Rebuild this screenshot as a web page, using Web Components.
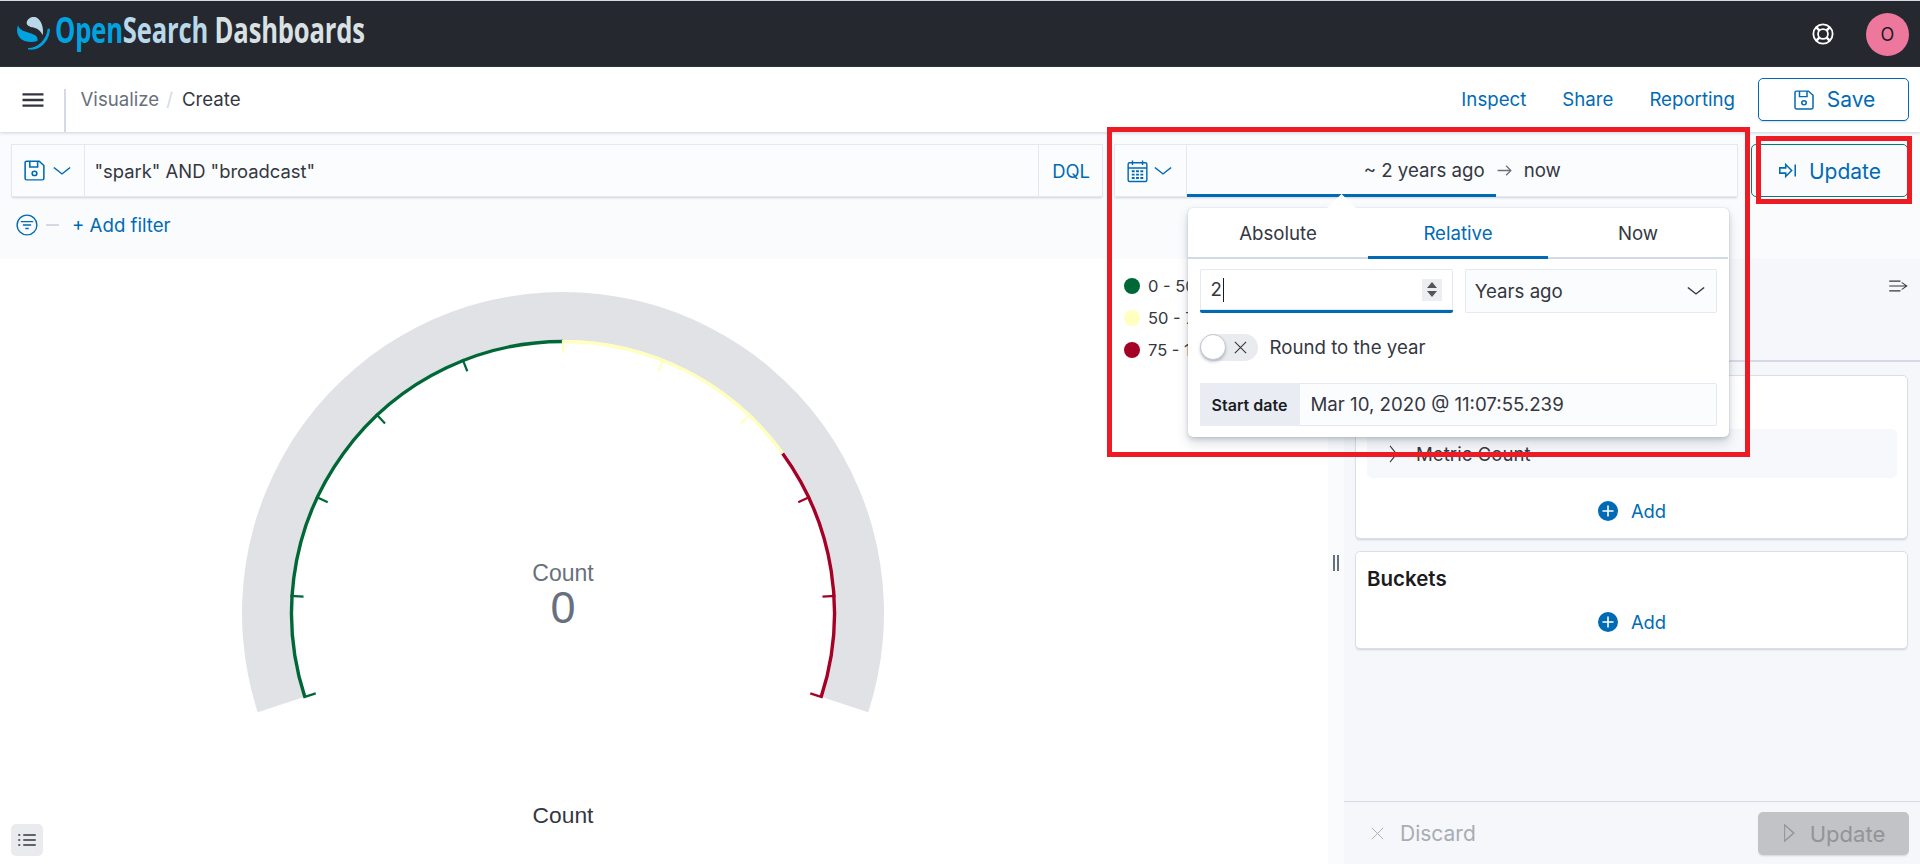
<!DOCTYPE html>
<html lang="en">
<head>
<meta charset="utf-8">
<title>Visualize</title>
<style>
html,body{margin:0;padding:0;background:#fff}
body{width:1920px;height:864px;overflow:hidden;font-family:Inter,"Liberation Sans",sans-serif;color:#343741;position:relative}
os-app{display:flex;flex-direction:column;width:1920px;height:864px;position:relative}
</style>
</head>
<body>
<os-app>
  <os-header></os-header>
  <os-nav></os-nav>
  <os-querybar></os-querybar>
  <os-workspace>
    <os-gauge slot="vis"></os-gauge>
    <os-legend slot="legend"></os-legend>
    <os-panel slot="panel"></os-panel>
  </os-workspace>
  <os-popover></os-popover>
  <os-annot style="left:1107px;top:127px;width:643px;height:330px"></os-annot>
  <os-annot style="left:1756px;top:136px;width:156px;height:68px"></os-annot>
</os-app>
<script>
const ICONS={
 menu:'<path d="M1 3h14M1 8h14M1 13h14" stroke-width="2.1"/>',
 save:'<path d="M3 1.5h8l3 3V13.5a1 1 0 0 1-1 1H3a1 1 0 0 1-1-1v-11a1 1 0 0 1 1-1z"/><path d="M5 1.5v4h5v-4"/><circle cx="8" cy="10" r="1.5"/>',
 chev:'<path d="M1.5 4.5L8 11l6.5-6.5"/>',
 chevr:'<path d="M5 1.5L11.5 8 5 14.5"/>',
 filter:'<circle cx="8" cy="8" r="7.2"/><path d="M3.5 5.5h9M5 8h6M6.8 10.5h2.4"/>',
 cal:'<rect x="1.5" y="2.5" width="13" height="12.5" rx="1"/><path d="M1.5 6h13M4.5 1v3M11.5 1v3"/><path d="M4 8.2h2M7 8.2h2M10 8.2h2M4 10.4h2M7 10.4h2M10 10.4h2M4 12.6h2M7 12.6h2M10 12.6h2" stroke-width="1.3"/>',
 arrow:'<path d="M1.5 8h12.5M9.5 3.5L14 8l-4.5 4.5"/>',
 refresh:'<path d="M1.5 5.8h5V3l5 5-5 5v-2.8h-5z" stroke-width="1.3"/><path d="M14.5 3v10" stroke-width="1.3"/>',
 ring:'<circle cx="8" cy="8" r="7"/><circle cx="8" cy="8" r="3.6"/><path d="M3 3l2.5 2.5M13 3l-2.5 2.5M3 13l2.5-2.5M13 13l-2.5-2.5" stroke-width="1.8"/>',
 x:'<path d="M2 2l12 12M14 2L2 14"/>',
 play:'<path d="M3 1.5L13.5 8 3 14.5z"/>',
 list:'<path d="M5 3h10M5 8h10M5 13h10" stroke-width="1.6"/><path d="M1 3h1.6M1 8h1.6M1 13h1.6" stroke-width="1.6"/>',
 collapse:'<path d="M1 2.5h9M1 13.5h9" stroke-width="1.3"/><path d="M1 8h14M11 4l4 4-4 4"/>'
};
class OsIcon extends HTMLElement{
  constructor(){super();const r=this.attachShadow({mode:'open'});
    const n=this.getAttribute('name'),w=this.getAttribute('w')||16,h=this.getAttribute('h')||w,c=this.getAttribute('color')||'currentColor',sw=this.getAttribute('sw')||1;
    r.innerHTML=`<style>:host{display:inline-flex;flex:none}svg{display:block}</style><svg width="${w}" height="${h}" viewBox="0 0 16 16" preserveAspectRatio="none" fill="none" stroke="${c}" stroke-width="${sw}">${ICONS[n]||''}</svg>`;}
}
customElements.define('os-icon',OsIcon);
function def(name,html){
  customElements.define(name,class extends HTMLElement{
    constructor(){super();this.attachShadow({mode:'open'}).innerHTML=html;}
  });
}
def('os-header',`<style>
:host{display:flex;align-items:center;height:66px;flex:none;background:#25282f;border-top:1px solid #d3dae6;padding-left:10px;padding-right:11px}
.mark{display:block;margin-top:-2px}
.name{width:307px;margin-left:-5px;height:50px;overflow:visible;white-space:nowrap}
.name span.t{display:inline-block;font:700 35px/50px "Open Sans",sans-serif;transform:scaleX(.73);transform-origin:0 50%;letter-spacing:-.2px;margin-top:-4px}
.o{color:#00a3e0}.s{color:#b9d9eb}.d{color:#d9e1e2}
.sp{flex:1}
.ring{margin-right:32px;margin-left:0;color:#fff}
.av{width:43px;height:43px;border-radius:50%;background:#ee789d;color:#1a1c21;font-size:18px;display:flex;align-items:center;justify-content:center}
</style>
<svg class="mark" width="50" height="46" viewBox="0 0 150 138">
<path fill="#b9d9eb" d="M50 38C52 24 68 18 78 22 95 30 102 55 98 76 92 60 80 55 68 52 58 50 50 46 50 38Z"/>
<path fill="#00a3e0" d="M24 46C28 60 42 64 56 68 72 72 86 78 82 93 70 97 58 97 44 93 26 87 16 68 24 46Z"/>
<path fill="#00a3e0" d="M54 114C82 114 110 90 113 56L120 56C119 92 90 125 54 118Z"/>
</svg>
<div class="name"><span class="t"><span class="o">Open</span><span class="s">Search</span> <span class="d">Dashboards</span></span></div>
<div class="sp"></div>
<os-icon class="ring" name="ring" w="22" sw="1.3"></os-icon>
<div class="av">O</div>`);
def('os-nav',`<style>
:host{display:flex;align-items:center;height:65px;flex:none;background:#fff;box-shadow:0 1px 3px rgba(152,162,179,.45);position:relative;z-index:2;font-size:18.67px;padding-right:11px}
.burger{width:64px;flex:none;display:flex;justify-content:center;color:#343741;padding-left:1px;box-sizing:border-box;align-self:stretch;align-items:center}
.div{width:1.5px;height:43px;background:#d3dae6;align-self:flex-end;flex:none}
.crumb{margin-left:15px;color:#69707d}.sl{margin:0 9px 0 7px;color:#d3dae6}.cur{color:#343741}
.sp{flex:1}
a{color:#006bb4;text-decoration:none;margin-right:36px}
a.last{margin-right:23px}
.btn{width:151px;height:43px;box-sizing:border-box;border:1.5px solid #006bb4;border-radius:5px;display:flex;align-items:center;justify-content:center;gap:11px;color:#006bb4;font-size:21px;box-shadow:0 2px 2px -1px rgba(152,162,179,.4);background:#fff}
</style>
<div class="burger"><os-icon name="menu" w="24" h="18"></os-icon></div><div class="div"></div>
<span class="crumb">Visualize</span><span class="sl">/</span><span class="cur">Create</span>
<div class="sp"></div>
<a>Inspect</a><a>Share</a><a class="last">Reporting</a>
<div class="btn"><os-icon name="save" w="24" h="22" sw="1"></os-icon><span>Save</span></div>`);
def('os-querybar',`<style>
:host{display:block;flex:none;height:127px;box-sizing:border-box;background:#fafbfd;padding:12px 12px 0 11px;font-size:18.4px}
.row{display:flex;height:53px}
.box{display:flex;align-items:center;background:#fbfcfd;box-shadow:inset 0 0 0 1px #e4e8f0,0 2px 2px -1px rgba(152,162,179,.45);box-sizing:border-box}
.q{width:1092px}
.seg{display:flex;align-items:center;align-self:stretch;color:#006bb4;flex:none;box-sizing:border-box;border-right:1px solid #e4e8f0}
.seg.a{width:73.5px;padding-left:11px;gap:5px}
.txt{flex:1;padding-left:10px;white-space:nowrap}
.dql{color:#006bb4;flex:none;width:65px;box-sizing:border-box;align-self:stretch;display:flex;align-items:center;justify-content:center;border-left:1px solid #e4e8f0}
.p{width:624px;margin-left:11px;font-size:18.67px}
.seg.b{width:72.5px;padding-left:11.5px;gap:4px}
.dates{flex:1;align-self:stretch;display:flex;align-items:center;justify-content:center;gap:11px;position:relative;white-space:nowrap}
.ar{color:#69707d}
.dates i{position:absolute;left:0;bottom:0;width:309px;height:3px;background:#006bb4}
.up{width:157px;margin-left:13px;box-sizing:border-box;border:1.5px solid #017d73;border-radius:5px;display:flex;align-items:center;justify-content:center;gap:12px;color:#006bb4;font-size:21px}
.up span{padding-top:1px}
.f{display:flex;align-items:center;height:56px;margin-left:5px;color:#006bb4;font-size:18.67px}
.f .dash{width:13px;height:1.5px;background:#d3dae6;margin:0 13px 0 8px}
</style>
<div class="row">
 <div class="box q"><div class="seg a"><os-icon name="save" w="25" h="23" sw="1"></os-icon><os-icon name="chev" w="20" h="16" sw="1.2"></os-icon></div><div class="txt">"spark" AND "broadcast"</div><div class="dql">DQL</div></div>
 <div class="box p"><div class="seg b"><os-icon name="cal" w="23" h="24" sw="1"></os-icon><os-icon name="chev" w="20" h="16" sw="1.2"></os-icon></div>
  <div class="dates"><span>~ 2 years ago</span><os-icon class="ar" name="arrow" w="17" sw="1.2"></os-icon><span>now</span><i></i></div></div>
 <div class="up"><os-icon name="refresh" w="19"></os-icon><span>Update</span></div>
</div>
<div class="f"><os-icon name="filter" w="22" sw="1"></os-icon><div class="dash"></div><span>+ Add filter</span></div>`);
def('os-workspace',`<style>
:host{display:flex;flex:1;min-height:0;background:#fff}
.vis{width:1126px;flex:none;position:relative}
.leg{width:202px;flex:none}
.res{width:16px;flex:none;background:#fafbfd;position:relative;box-sizing:border-box;display:flex;justify-content:center;padding-top:296px}
.res b{display:block;width:6px;height:16px;box-sizing:border-box;border-left:2px solid #69707d;border-right:2px solid #69707d}
.pan{width:576px;flex:none;display:flex}
</style>
<div class="vis"><slot name="vis"></slot></div><div class="leg"><slot name="legend"></slot></div>
<div class="res"><b></b></div><div class="pan"><slot name="panel"></slot></div>`);
customElements.define('os-gauge',class extends HTMLElement{
  constructor(){super();
    const cx=330,cy=324;
    const pt=(r,d)=>{const a=d*Math.PI/180;return [(cx+r*Math.cos(a)).toFixed(2),(cy-r*Math.sin(a)).toFixed(2)]};
    const arc=(r,a,b)=>{const s=pt(r,a),e=pt(r,b);return `M${s[0]} ${s[1]}A${r} ${r} 0 ${a-b>180?1:0} 1 ${e[0]} ${e[1]}`};
    const ring=()=>{const s=pt(321,198),e=pt(321,-18),s2=pt(273,-18),e2=pt(273,198);return `M${s[0]} ${s[1]}A321 321 0 1 1 ${e[0]} ${e[1]}L${s2[0]} ${s2[1]}A273 273 0 1 0 ${e2[0]} ${e2[1]}Z`};
    const G='#006837',Y='#ffffbf',R='#a50026';
    let s=`<path d="${ring()}" fill="#e0e2e6"/>`;
    s+=`<path d="${arc(271.5,198,90)}" stroke="${G}" stroke-width="3.4" fill="none"/><path d="${arc(271.5,90,36)}" stroke="${Y}" stroke-width="3.4" fill="none"/><path d="${arc(271.5,36,-18)}" stroke="${R}" stroke-width="3.4" fill="none"/>`;
    for(let i=0;i<=10;i++){const d=198-21.6*i,a=pt(273,d),b=pt(260,d),c=i<5?G:i<8?Y:R;
      s+=`<path d="M${a[0]} ${a[1]}L${b[0]} ${b[1]}" stroke="${c}" stroke-width="2.2"/>`;}
    this.attachShadow({mode:'open'}).innerHTML=`<style>
:host{display:flex;flex-direction:column;align-items:center;height:605px;padding-top:30px;box-sizing:border-box;font-family:"Liberation Sans",Arial,sans-serif}
.g{position:relative;width:660px;height:430px;flex:none}
svg{display:block}
.c{position:absolute;left:0;right:0;top:272px;text-align:center;color:#69707d;font-size:23px;line-height:24px}
.v{position:absolute;left:0;right:0;top:294px;text-align:center;color:#69707d;font-size:45px;line-height:50px}
.l{margin-top:84px;font-size:22.8px;line-height:24px;color:#343741}
.btn{position:absolute;left:11px;bottom:8px;width:32px;height:32px;border-radius:5px;background:#e9ebee;display:flex;align-items:center;justify-content:center;color:#343741}
</style><div class="g"><svg width="660" height="430" viewBox="0 0 660 430">${s}</svg><div class="c">Count</div><div class="v">0</div></div><div class="l">Count</div><div class="btn"><os-icon name="list" w="20" h="16"></os-icon></div>`;}
});
def('os-legend',`<style>
:host{display:flex;flex-direction:column;gap:16px;padding-top:19px;margin-left:-2px;font-size:16.5px;color:#343741;white-space:nowrap}
div{display:flex;align-items:center;height:16px;gap:8px}
b{width:16px;height:16px;border-radius:50%;display:block}
</style>
<div><b style="background:#006837"></b>0 - 50</div>
<div><b style="background:#ffffbf"></b>50 - 75</div>
<div><b style="background:#a50026"></b>75 - 100</div>`);
def('os-card',`<style>
:host{display:block;background:#fff;border:1px solid #d9dfe9;border-radius:5px;box-sizing:border-box;box-shadow:0 2px 2px -1px rgba(152,162,179,.45);padding:0 10px 0 11px}
</style><slot></slot>`);
def('os-add',`<style>
:host{display:flex;align-items:center;justify-content:center;gap:13px;color:#006bb4;font-size:18.4px;height:24px}
svg{display:block}
</style><svg width="20" height="20" viewBox="0 0 20 20"><circle cx="10" cy="10" r="10" fill="#006bb4"/><path d="M10 4.5v11M4.5 10h11" stroke="#fff" stroke-width="1.6"/></svg><span>Add</span>`);
def('os-panel',`<style>
:host{display:flex;flex-direction:column;width:576px;height:605px;background:#f5f7fa;font-size:18.67px}
.top{flex:none;border-bottom:2px solid #d3dae6;display:flex;justify-content:flex-end;padding:20px 12px 0 0;box-sizing:border-box;height:103px}
.body{flex:1;padding:13px 12px 0 11px}
.c1{height:164px;padding-top:53px;margin:0}
.row{height:49px;background:#f7f8fb;border-radius:5px;display:flex;align-items:center;padding-left:18px;gap:15px;color:#343741;white-space:nowrap}
.row span{padding-top:2px}
.c1 os-add{margin-top:21px}
.c2{height:98px;margin-top:12px}
h3{margin:0;padding-top:15px;font-size:20.5px;font-weight:600;line-height:24px;color:#1a1c21}
.c2 os-add{margin-top:19px}
.foot{height:63px;flex:none;border-top:1.5px solid #d3dae6;box-sizing:border-box;display:flex;align-items:center;padding:0 11px 0 26px;color:#a8acb3;font-size:21px}
.sp{flex:1}
.d{display:flex;align-items:center;gap:15px}
.d span,.u span{padding-top:1px}
.u{width:151px;height:43px;border-radius:5px;background:#c2c3c6;color:#919499;display:flex;align-items:center;justify-content:center;gap:14px;font-size:22px;box-shadow:0 2px 2px -1px rgba(152,162,179,.4)}
.cl{color:#343741}
</style>
<div class="top"><os-icon class="cl" name="collapse" w="20" h="14"></os-icon></div>
<div class="body">
 <os-card class="c1"><div class="row"><os-icon name="chevr" w="16" h="20" sw="1.1"></os-icon><span>Metric Count</span></div><os-add></os-add></os-card>
 <os-card class="c2"><h3>Buckets</h3><os-add></os-add></os-card>
</div>
<div class="foot"><div class="d"><os-icon name="x" w="15"></os-icon><span>Discard</span></div><div class="sp"></div><div class="u"><os-icon name="play" w="14" h="20" sw="1.2"></os-icon><span>Update</span></div></div>`);
def('os-popover',`<style>
:host{position:absolute;left:1188px;top:208px;width:541px;height:229px;box-sizing:border-box;background:#fff;border-radius:5px;box-shadow:0 0 1px rgba(152,162,179,.6),0 6px 12px rgba(65,78,101,.2),0 2px 4px rgba(65,78,101,.2);font-size:18.67px;z-index:5;color:#343741;display:block}
.tip{position:absolute;left:139px;top:-14px;width:29px;height:14px;background:#fff;clip-path:polygon(50% 0,100% 100%,0 100%)}
.tabs{display:flex;height:51px;box-sizing:border-box;border-bottom:2px solid #d3dae6;margin-right:1px}
.tab{width:180px;display:flex;align-items:center;justify-content:center;height:51px;box-sizing:border-box;padding-bottom:1px}
.on{color:#006bb4;border-bottom:3px solid #006bb4;padding-top:2px;padding-bottom:0}
.b{padding:10px 12px 0 11.5px}
.r1{display:flex;gap:12px}
.inp{height:44px;box-sizing:border-box;background:#fbfcfd;box-shadow:inset 0 0 0 1px #e4e8f0;border-radius:2px;display:flex;align-items:center;position:relative}
.n{width:253.5px;background:#fff;padding-left:11px;border-bottom:3px solid #006bb4}
.caret{width:1.3px;height:24px;background:#1a1c21;margin-left:1px}
.sp{flex:1}
.spin{width:20px;height:22px;background:#eceef1;margin-right:11px;display:flex;flex-direction:column;align-items:center;justify-content:center;gap:3px}
.up,.dn{width:0;height:0;border-left:5px solid transparent;border-right:5px solid transparent}
.up{border-bottom:6px solid #555}.dn{border-top:6px solid #555}
.s{width:252.5px;padding:0 11px 0 10px}
.r2{display:flex;align-items:center;gap:12px;margin-top:21px;height:27px}
.sw{width:58px;height:27px;border-radius:14px;background:#e9ebef;position:relative;display:flex;align-items:center;justify-content:flex-end;padding-right:10px;box-sizing:border-box;color:#343741}
.k{position:absolute;left:0;top:0;width:26px;height:26px;border-radius:50%;background:#fff;border:1px solid #c2c7d0;box-sizing:border-box;box-shadow:0 2px 3px rgba(65,78,101,.3)}
.lab{font-size:18.67px}
.r3{display:flex;margin-top:22px;height:43px;box-shadow:inset 0 0 0 1px #e4e8f0;border-radius:2px;background:#fbfcfd;align-items:stretch}
.pre{width:100px;background:#e9edf3;display:flex;align-items:center;justify-content:center;font-size:16px;font-weight:600;color:#1a1c21;white-space:nowrap}
.val{padding-left:11px;display:flex;align-items:center;white-space:nowrap}
</style>
<div class="tip"></div>
<div class="tabs"><div class="tab">Absolute</div><div class="tab on">Relative</div><div class="tab">Now</div></div>
<div class="b">
 <div class="r1"><div class="inp n"><span>2</span><i class="caret"></i><div class="sp"></div><div class="spin"><i class="up"></i><i class="dn"></i></div></div>
 <div class="inp s"><span>Years ago</span><div class="sp"></div><os-icon name="chev" w="20" h="16" sw="1.1"></os-icon></div></div>
 <div class="r2"><div class="sw"><div class="k"></div><os-icon name="x" w="15" sw="1.2"></os-icon></div><span class="lab">Round to the year</span></div>
 <div class="r3"><div class="pre">Start date</div><div class="val">Mar 10, 2020 @ 11:07:55.239</div></div>
</div>`);
def('os-annot',`<style>
:host{position:absolute;box-sizing:border-box;border:5px solid #ed1c24;z-index:6;pointer-events:none;display:block}
</style>`);
</script>
</body>
</html>
